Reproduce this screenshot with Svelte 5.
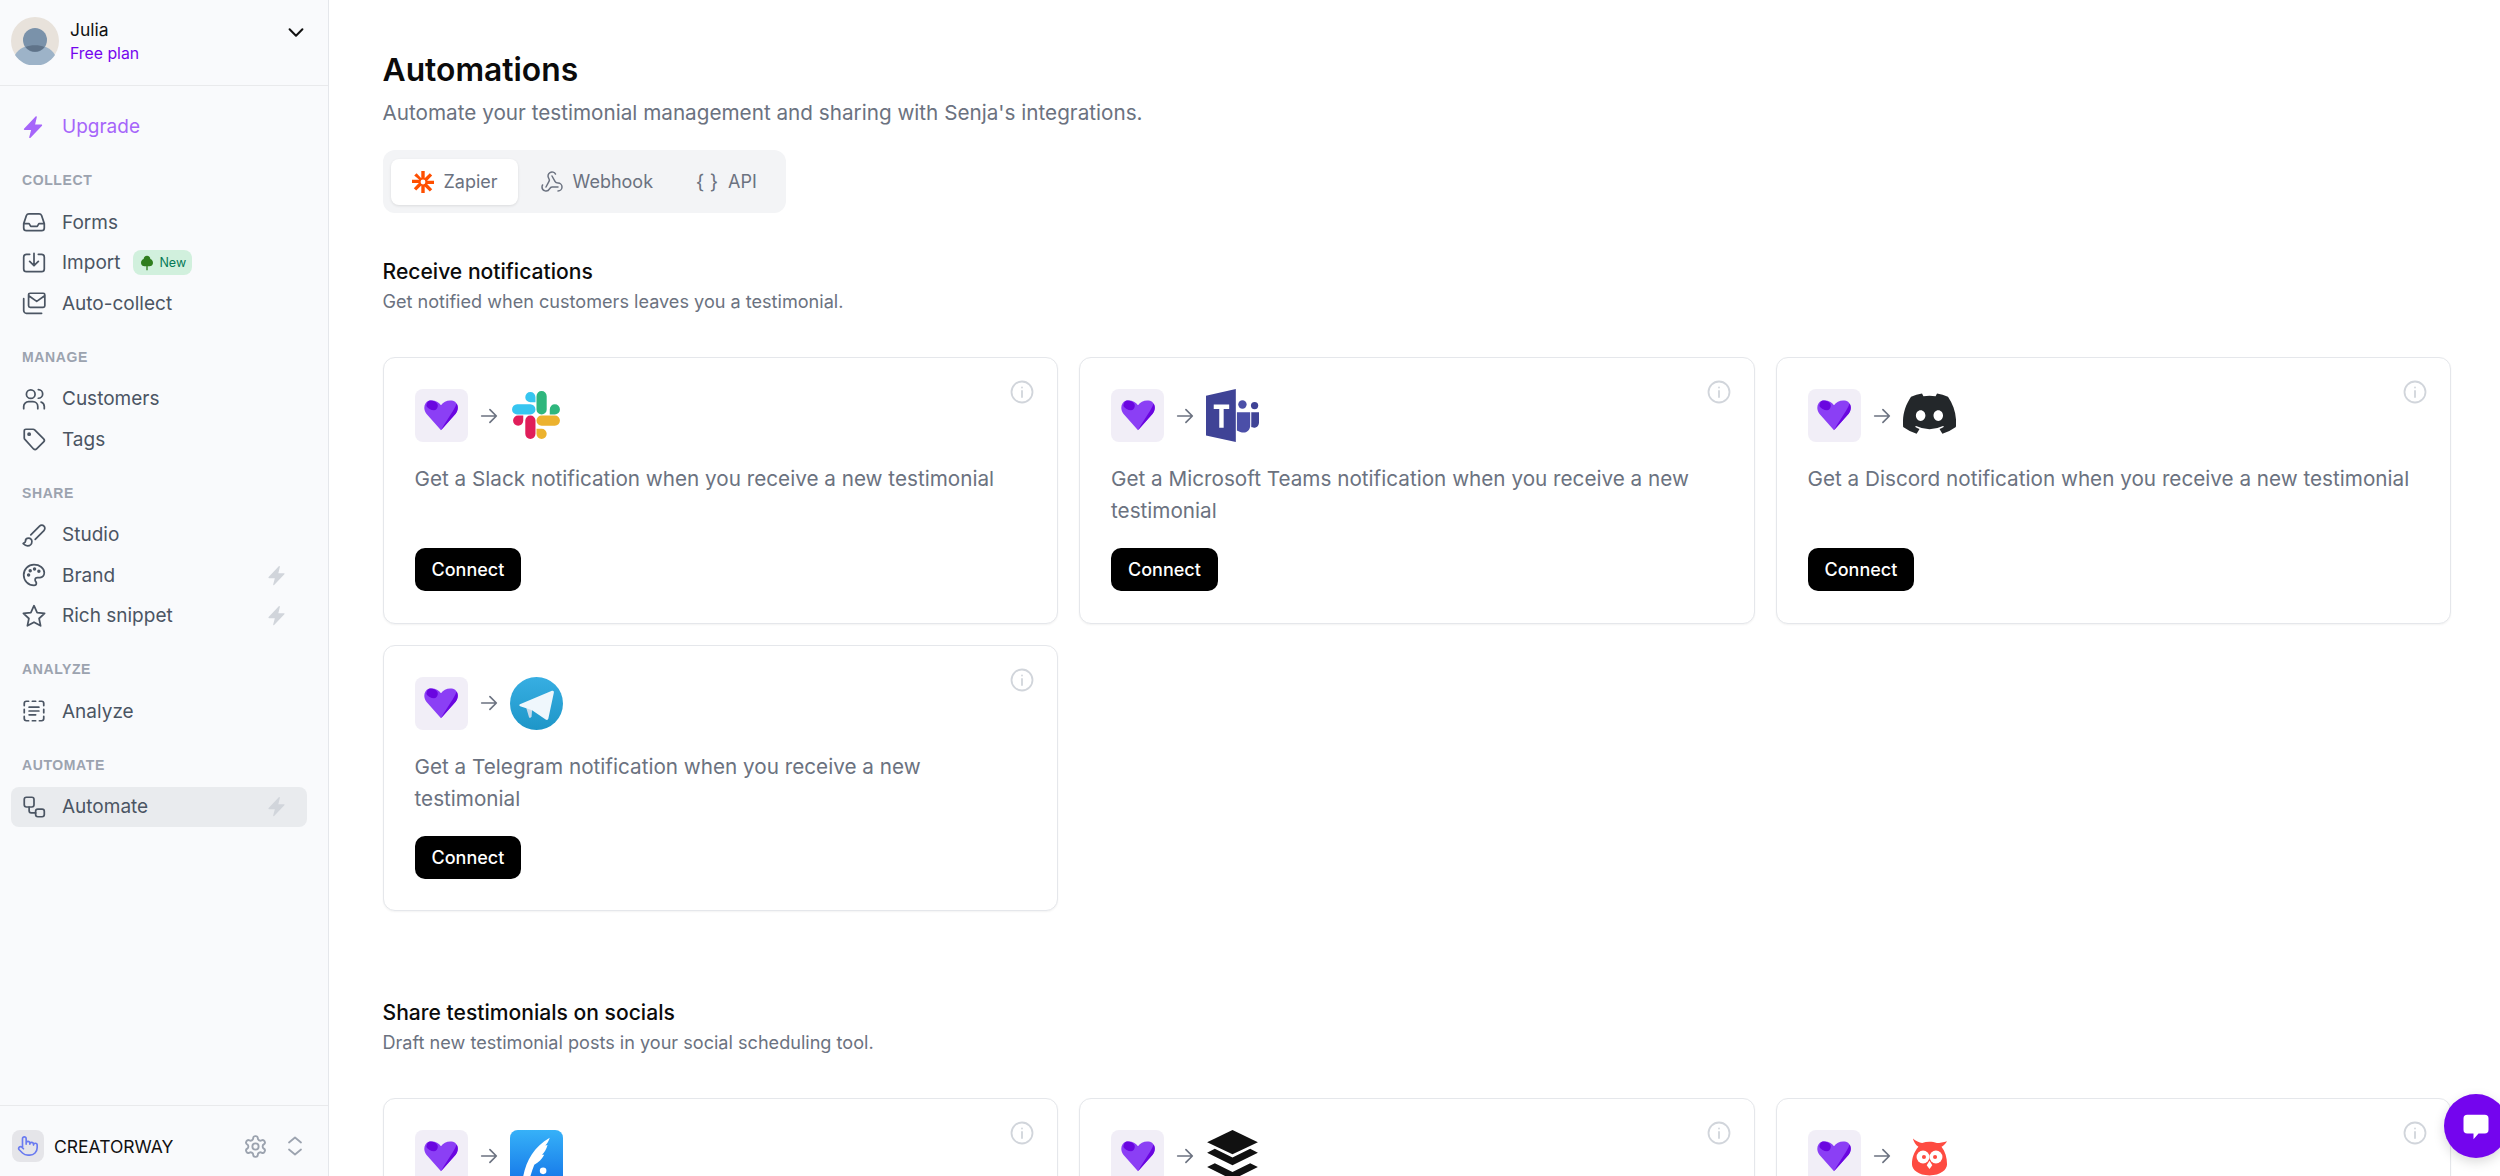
<script>
	const sections = [
		{
			title: 'COLLECT',
			items: [
				{ label: 'Forms', icon: 'inbox' },
				{ label: 'Import', icon: 'import', badge: true },
				{ label: 'Auto-collect', icon: 'collect' }
			]
		},
		{
			title: 'MANAGE',
			items: [
				{ label: 'Customers', icon: 'users' },
				{ label: 'Tags', icon: 'tag' }
			]
		},
		{
			title: 'SHARE',
			items: [
				{ label: 'Studio', icon: 'brush' },
				{ label: 'Brand', icon: 'palette', bolt: true },
				{ label: 'Rich snippet', icon: 'star', bolt: true }
			]
		},
		{
			title: 'ANALYZE',
			items: [{ label: 'Analyze', icon: 'analyze' }]
		},
		{
			title: 'AUTOMATE',
			items: [{ label: 'Automate', icon: 'automate', bolt: true, active: true }]
		}
	];

	const notifications = [
		{ logo: 'slack', text: 'Get a Slack notification when you receive a new testimonial' },
		{ logo: 'teams', text: 'Get a Microsoft Teams notification when you receive a new testimonial' },
		{ logo: 'discord', text: 'Get a Discord notification when you receive a new testimonial' },
		{ logo: 'telegram', text: 'Get a Telegram notification when you receive a new testimonial' }
	];

	// the rest of these cards is below the fold
	const socials = [{ logo: 'feather' }, { logo: 'buffer' }, { logo: 'owl' }];
</script>

{#snippet navIcon(name)}
	<svg class="nav-icon" viewBox="0 0 24 24" fill="none" stroke="currentColor" stroke-width="1.6" stroke-linecap="round" stroke-linejoin="round">
		{#if name === 'inbox'}
			<path d="M2.5 13.5v4A2.5 2.5 0 0 0 5 20h14a2.5 2.5 0 0 0 2.5-2.5v-4M2.5 13.5 5 6a2.5 2.5 0 0 1 2.3-1.500h9.400A2.5 2.5 0 0 1 19 6l2.5 7.500M2.500 13.500h5l1.500 2.500h6l1.500-2.500h5" />
		{:else if name === 'import'}
			<path d="M8 4H5a2.5 2.5 0 0 0-2.5 2.5v11A2.5 2.5 0 0 0 5 20h14a2.5 2.5 0 0 0 2.5-2.5v-11A2.5 2.5 0 0 0 19 4h-3M12 3v11M8 10.5l4 4 4-4" />
		{:else if name === 'collect'}
			<path d="M7 4.500A1.500 1.500 0 0 1 8.500 3h12A1.500 1.500 0 0 1 22 4.500v10a1.500 1.500 0 0 1-1.500 1.500h-12A1.500 1.500 0 0 1 7 14.500zM7.500 5.500l7 5 7-5M2.500 8v11A2.500 2.500 0 0 0 5 21.500h14" />
		{:else if name === 'users'}
			<circle cx="9" cy="7.5" r="4" /><path d="M2.500 21v-2A4.500 4.500 0 0 1 7 14.500h4a4.500 4.500 0 0 1 4.500 4.500v2M16 3.300a4 4 0 0 1 0 8M18.500 14.800a4.500 4.500 0 0 1 3 4.200v2" />
		{:else if name === 'tag'}
			<path d="M3 4.500A1.500 1.500 0 0 1 4.500 3h6.700a2 2 0 0 1 1.400.6l8.300 8.300a2 2 0 0 1 0 2.800l-6.500 6.500a2 2 0 0 1-2.800 0L3.600 12.400a2 2 0 0 1-.6-1.400z" /><circle cx="7.5" cy="7.5" r="1" />
		{:else if name === 'brush'}
			<path d="m9.060 11.900 8.070-8.060a2.850 2.850 0 1 1 4.030 4.030l-8.060 8.080M7.070 14.940c-1.660 0-3 1.350-3 3.020 0 1.330-2.500 1.520-2 2.020 1.080 1.100 2.490 2.020 4 2.020 2.200 0 4-1.800 4-4.040a3.010 3.010 0 0 0-3-3.020z" />
		{:else if name === 'palette'}
			<path d="M12 2.500a9.500 9.500 0 1 0 0 19c1.500 0 2.200-1 2.200-2 0-.6-.3-1-.6-1.400-.4-.5-.6-.9-.6-1.500 0-1.200 1-2.100 2.200-2.100h2.300a4.500 4.500 0 0 0 4-4.500c0-4.400-4.300-7.500-9.500-7.500z" /><circle cx="7" cy="12" r=".8" /><circle cx="8.5" cy="8" r=".8" /><circle cx="12.5" cy="6.500" r=".8" /><circle cx="16.5" cy="8.500" r=".8" />
		{:else if name === 'star'}
			<path d="m12 2.500 2.900 6.300 6.900.8-5.100 4.700 1.400 6.800L12 17.700l-6.100 3.400 1.400-6.800L2.200 9.600l6.900-.8z" />
		{:else if name === 'analyze'}
			<path d="M7 3H5a2 2 0 0 0-2 2v2M10.500 3h3M17 3h2a2 2 0 0 1 2 2v2M21 10.500v3M21 17v2a2 2 0 0 1-2 2h-2M13.500 21h-3M7 21H5a2 2 0 0 1-2-2v-2M3 13.500v-3M7.500 8.500h9M7.500 12h9M7.500 15.500h6" />
		{:else if name === 'automate'}
			<rect x="3" y="3" width="9" height="9" rx="2" /><rect x="13.500" y="14" width="8" height="7" rx="2" /><path d="M7.500 12v3.500a2 2 0 0 0 2 2h4" />
		{/if}
	</svg>
{/snippet}

{#snippet bolt(cls)}
	<svg class={cls} viewBox="0 0 24 24" fill="currentColor"><path d="M14.600 1.500 3 13.800c-.4.500-.1 1.200.5 1.200h6.600l-1.900 7.300c-.2.700.6 1.100 1.100.6L21 10.700c.4-.5.100-1.200-.6-1.200h-6.300l1.700-7.300c.2-.8-.7-1.200-1.200-.7z" /></svg>
{/snippet}

{#snippet logo(name)}
	{#if name === 'slack'}
		<svg class="logo" viewBox="-2 -2 52 52">
			<path fill="#36c5f0" d="M18 1a5 5 0 0 0 0 10h5V6a5 5 0 0 0-5-5zM5 13a5 5 0 0 0 0 10h13a5 5 0 0 0 0-10z" />
			<path fill="#2eb67d" d="M47 18a5 5 0 0 0-10 0v5h5a5 5 0 0 0 5-5zM34 18V5a5 5 0 0 0-10 0v13a5 5 0 0 0 10 0z" />
			<path fill="#ecb22e" d="M29 47a5 5 0 0 0 0-10h-5v5a5 5 0 0 0 5 5zM29 34h13a5 5 0 0 0 0-10H29a5 5 0 0 0 0 10z" />
			<path fill="#e01e5a" d="M1 29a5 5 0 0 0 10 0v-5H6a5 5 0 0 0-5 5zM13 29v13a5 5 0 0 0 10 0V29a5 5 0 0 0-10 0z" />
		</svg>
	{:else if name === 'teams'}
		<svg class="logo" viewBox="0 0 48 48">
			<circle cx="33" cy="14" r="3.800" fill="#4b4fa8" /><circle cx="44" cy="15" r="3.300" fill="#3f4396" />
			<path fill="#4b4fa8" d="M28 21h12v12c0 4-3 6.500-6 6.500-2 0-4-1-6-2z" />
			<path fill="#3f4396" d="M41 21h7v9c0 3-2 5-4.500 5-1 0-2-.3-2.500-.5z" />
			<path fill="#3f4396" d="M0 6 27 0v48L0 42z" />
			<path fill="#fff" d="M7 14h14v4h-5v17h-4V18H7z" />
		</svg>
	{:else if name === 'discord'}
		<svg class="logo discord" viewBox="0 0 127 96">
			<path fill="#23272a" d="M107.700 8.100A105 105 0 0 0 81.500 0a72 72 0 0 0-3.400 6.800 97.700 97.700 0 0 0-29.100 0A72 72 0 0 0 45.600 0a105.900 105.900 0 0 0-26.300 8.100C2.700 32.700-1.800 56.600.4 80.200A105.700 105.700 0 0 0 32.600 96.300a77.700 77.700 0 0 0 6.900-11.100 68.400 68.400 0 0 1-10.900-5.200c.9-.7 1.800-1.300 2.600-2a75.600 75.600 0 0 0 64.700 0c.9.700 1.700 1.400 2.600 2a68.700 68.700 0 0 1-10.900 5.200 77 77 0 0 0 6.900 11.100 105.300 105.300 0 0 0 32.200-16.100c2.600-27.300-4.500-51-18.900-72.100zM42.300 65.700c-6.300 0-11.400-5.700-11.400-12.700s5-12.700 11.400-12.700 11.500 5.700 11.400 12.700-5.100 12.700-11.400 12.700zm42.200 0c-6.300 0-11.400-5.700-11.400-12.700s5-12.700 11.400-12.700 11.500 5.700 11.400 12.700-5 12.700-11.400 12.700z" />
		</svg>
	{:else if name === 'telegram'}
		<svg class="logo" viewBox="0 0 48 48">
			<defs><linearGradient id="tg" x1="0" y1="0" x2="0" y2="1"><stop offset="0" stop-color="#37aee2" /><stop offset="1" stop-color="#1e96c8" /></linearGradient></defs>
			<circle cx="24" cy="24" r="24" fill="url(#tg)" />
			<path fill="#c8daea" d="M18 37c-.8 0-.7-.3-.9-1l-2.300-7.700 17.500-10.400L20 30l-.5 6.300c-.3 0-.8.700-1.500.700z" />
			<path fill="#eff7fc" d="M9 24.700 38 12.500c1.200-.4 2 .3 1.700 1.800l-4.900 23c-.3 1.500-1.300 1.900-2.500 1.200L20 30l-6-2-4.800-1.600c-1-.4-1-1.200-.2-1.700z" />
		</svg>
	{:else if name === 'feather'}
		<svg class="logo" viewBox="0 0 48 48">
			<defs><linearGradient id="fe" x1="0" y1="0" x2="0" y2="1"><stop offset="0" stop-color="#36b1f8" /><stop offset="1" stop-color="#1576e8" /></linearGradient></defs>
			<rect width="48" height="48" rx="7" fill="url(#fe)" />
			<path fill="#fff" d="M11 48c2-17 9-32 25-41-1 3-2 5-4 7l2-.5c-1 4-3 7-5 9h2c-2 4-5 7-9 9-2 5-4 11-5 16.500z" />
			<circle cx="30" cy="37" r="3" fill="#fff" />
		</svg>
	{:else if name === 'buffer'}
		<svg class="logo" viewBox="0 0 48 48">
			<path fill="#111" d="M24 0 47 11 24 22 1 11z" />
			<path fill="#111" d="m8 17 16 8 16-8 7 3.500-23 11.500L1 20.500z" />
			<path fill="#111" d="m8 30 16 8 16-8 7 3.500-23 11.500L1 33.500z" />
		</svg>
	{:else if name === 'owl'}
		<svg class="logo" viewBox="-4.700 -3.200 57.400 57.400">
			<path fill="#fe4b41" d="M6 6c3 3 7 4 10 5 5-2 11-2 16 0 3 0 7-1 11-2-2 3-4 5-6 6 4 5 6 12 6 19 0 6-7 12-19 12S5 40 5 34c0-7 2-13 7-19-3-2-5-5-6-9z" />
			<circle cx="17" cy="26" r="7" fill="#fff" /><circle cx="31" cy="26" r="7" fill="#fff" />
			<circle cx="18" cy="26" r="2.200" fill="#fe4b41" /><circle cx="30" cy="26" r="2.200" fill="#fe4b41" />
			<path fill="#fff" d="m24 30-3 5 3 4 3-4z" />
		</svg>
	{/if}
{/snippet}

{#snippet card(item)}
	<div class="card">
		<svg class="info" viewBox="0 0 24 24" fill="none" stroke="currentColor" stroke-width="1.800" stroke-linecap="round"><circle cx="12" cy="12" r="10.500" /><path d="M12 11v6M12 7.500v.1" /></svg>
		<div class="card-top">
			<span class="heart-box">
				<svg viewBox="0 0 40 36" class="heart">
					<path fill="#8b3ff5" d="M20 35 3 16C-1 11 0 3 6 1c5-1.500 11 .500 14 5 3-4.500 9-6.500 14-5 6 2 7 10 3 15z" />
					<path fill="#6a06e0" d="M20 35 37 16c3-4 3.500-9 1-12-2 7-10 17-18 31zM6 1c4-1 8 .5 10 4 1 3-1 7-4 7-4 0-7-2-9-5 .5-3 1-5 3-6z" />
				</svg>
			</span>
			<svg class="arrow" viewBox="0 0 24 24" fill="none" stroke="currentColor" stroke-width="1.800" stroke-linecap="round" stroke-linejoin="round"><path d="M4 12h16M13 5l7 7-7 7" /></svg>
			{@render logo(item.logo)}
		</div>
		{#if item.text}
			<p class="card-text">{item.text}</p>
			<button class="connect">Connect</button>
		{/if}
	</div>
{/snippet}

<div class="page">
	<aside class="sidebar">
		<div class="account">
			<span class="avatar">
				<svg viewBox="0 0 48 48">
					<circle cx="24" cy="24" r="24" fill="#e8e2db" />
					<path fill="#9db3c8" d="M4 38c4-7 11-10 20-10s16 3 20 10a24 24 0 0 1-40 0z" />
					<circle cx="24" cy="23" r="12" fill="#7a92aa" />
					<path fill="#5f7389" d="M14.500 30c5-2.500 14-2.500 19 0a12 12 0 0 1-19 0z" />
				</svg>
			</span>
			<div class="account-text">
				<span class="account-name">Julia</span>
				<span class="account-plan">Free plan</span>
			</div>
			<svg class="chevron" viewBox="0 0 24 24" fill="none" stroke="currentColor" stroke-width="2.200" stroke-linecap="round" stroke-linejoin="round"><path d="m5 8 7 7 7-7" /></svg>
		</div>

		<nav class="nav">
			<a class="upgrade" href="#upgrade">
				{@render bolt('upgrade-bolt')}
				<span>Upgrade</span>
			</a>

			{#each sections as section}
				<div class="section">
					<h4 class="section-title">{section.title}</h4>
					{#each section.items as item}
						<a class="nav-item" class:active={item.active} href="#item">
							{@render navIcon(item.icon)}
							<span>{item.label}</span>
							{#if item.badge}
								<span class="badge">
									<svg viewBox="0 0 24 24" fill="#2f7d1e"><path d="M12 1c3 0 5 2.500 5 5 2.500 1 4 3 4 6 0 3-2.500 5-5.500 5H13v6h-2v-6H8.500C5.500 17 3 15 3 12c0-3 1.500-5 4-6 0-2.500 2-5 5-5z" /></svg>
									New
								</span>
							{/if}
							{#if item.bolt}
								{@render bolt('nav-bolt')}
							{/if}
						</a>
					{/each}
				</div>
			{/each}
		</nav>

		<div class="workspace">
			<span class="workspace-logo">
				<svg viewBox="0 0 24 24" fill="none" stroke="#6a7bf0" stroke-width="1.800" stroke-linecap="round" stroke-linejoin="round"><path d="M22 14a8 8 0 0 1-8 8M18 11v-1a2 2 0 0 0-2-2 2 2 0 0 0-2 2M14 10V9a2 2 0 0 0-2-2 2 2 0 0 0-2 2v1M10 9.500V4a2 2 0 0 0-2-2 2 2 0 0 0-2 2v10M18 11a2 2 0 1 1 4 0v3a8 8 0 0 1-8 8h-2c-2.800 0-4.500-.86-5.990-2.340l-3.600-3.600a2 2 0 0 1 2.830-2.820L7 15" /></svg>
			</span>
			<span class="workspace-name">CREATORWAY</span>
			<svg class="workspace-icon" viewBox="0 0 24 24" fill="none" stroke="currentColor" stroke-width="1.800" stroke-linecap="round" stroke-linejoin="round"><circle cx="12" cy="12" r="3" /><path d="M12.220 2h-.44a2 2 0 0 0-2 2v.18a2 2 0 0 1-1 1.730l-.43.25a2 2 0 0 1-2 0l-.15-.08a2 2 0 0 0-2.730.73l-.22.38a2 2 0 0 0 .73 2.730l.15.1a2 2 0 0 1 1 1.720v.51a2 2 0 0 1-1 1.740l-.15.09a2 2 0 0 0-.73 2.730l.22.38a2 2 0 0 0 2.730.73l.15-.08a2 2 0 0 1 2 0l.43.25a2 2 0 0 1 1 1.730V20a2 2 0 0 0 2 2h.44a2 2 0 0 0 2-2v-.18a2 2 0 0 1 1-1.730l.43-.25a2 2 0 0 1 2 0l.15.08a2 2 0 0 0 2.730-.73l.22-.39a2 2 0 0 0-.73-2.730l-.15-.08a2 2 0 0 1-1-1.740v-.5a2 2 0 0 1 1-1.740l.15-.09a2 2 0 0 0 .73-2.730l-.22-.38a2 2 0 0 0-2.730-.73l-.15.08a2 2 0 0 1-2 0l-.43-.25a2 2 0 0 1-1-1.730V4a2 2 0 0 0-2-2z" /></svg>
			<svg class="workspace-icon updown" viewBox="0 0 24 24" fill="none" stroke="currentColor" stroke-width="1.800" stroke-linecap="round" stroke-linejoin="round"><path d="m6 8.500 6-5 6 5M6 15.500l6 5 6-5" /></svg>
		</div>
	</aside>

	<main class="main">
		<h1 class="title">Automations</h1>
		<p class="subtitle">Automate your testimonial management and sharing with Senja's integrations.</p>

		<div class="tabs">
			<div class="tab selected">
				<svg class="tab-icon" viewBox="0 0 24 24" fill="#ff4f00"><path d="M10.300 1h3.400v7.300l5.100-5.100 2.400 2.400-5.100 5.100H23v3.400h-6.900l5.100 5.100-2.400 2.400-5.100-5.100V23h-3.400v-7.500l-5.100 5.100-2.400-2.400 5.100-5.100H1v-3.400h7.300L3.200 5.600l2.400-2.400 4.700 5.100z" /><circle cx="12" cy="12" r="2.400" fill="#fff" /></svg>
				Zapier
			</div>
			<div class="tab">
				<svg class="tab-icon" viewBox="0 0 24 24" fill="none" stroke="currentColor" stroke-width="1.500" stroke-linecap="round" stroke-linejoin="round"><path d="M18 16.980h-5.990c-1.100 0-1.950.94-2.480 1.900A4 4 0 0 1 2 17c.01-.7.2-1.400.57-2M6 17l3.130-5.780c.53-.97.1-2.180-.5-3.100a4 4 0 1 1 6.890-4.060M12 6l3.130 5.730C15.660 12.700 16.900 13 18 13a4 4 0 0 1 0 8" /></svg>
				Webhook
			</div>
			<div class="tab">
				<span class="braces">{'{ }'}</span>
				API
			</div>
		</div>

		<h2 class="section-heading">Receive notifications</h2>
		<p class="section-sub">Get notified when customers leaves you a testimonial.</p>
		<div class="cards">
			{#each notifications as item}
				{@render card(item)}
			{/each}
		</div>

		<h2 class="section-heading second">Share testimonials on socials</h2>
		<p class="section-sub">Draft new testimonial posts in your social scheduling tool.</p>
		<div class="cards">
			{#each socials as item}
				{@render card(item)}
			{/each}
		</div>
	</main>

	<button class="chat" aria-label="Open chat">
		<svg viewBox="0 0 24 24" fill="#fff"><path d="M5 3h14a3 3 0 0 1 3 3v9a3 3 0 0 1-3 3h-5l-4 4.500V18H5a3 3 0 0 1-3-3V6a3 3 0 0 1 3-3z" /></svg>
	</button>
</div>

<style>
	:global(body) {
		margin: 0;
		font-family: Inter, 'Liberation Sans', sans-serif;
		background: #fff;
	}

	.page {
		display: flex;
		height: 1176px;
		overflow: hidden;
		position: relative;
	}

	/* SIDEBAR */
	.sidebar {
		width: 329px;
		flex-shrink: 0;
		box-sizing: border-box;
		display: flex;
		flex-direction: column;
		background: #f9fafc;
		border-right: 1px solid #e5e7eb;
		height: 100%;
	}

	.account {
		display: flex;
		align-items: center;
		height: 86px;
		box-sizing: border-box;
		padding: 0 21px 4px 11px;
		gap: 11px;
		border-bottom: 1px solid #e9eaec;
		flex-shrink: 0;
	}

	.avatar {
		width: 48px;
		height: 48px;
		flex-shrink: 0;
	}

	.avatar svg {
		display: block;
		width: 48px;
		height: 48px;
	}

	.account-text {
		display: flex;
		flex-direction: column;
		flex: 1;
		gap: 2.500px;
		margin-top: 2px;
	}

	.account-name {
		font-size: 17.500px;
		line-height: 22px;
		color: #111;
	}

	.account-plan {
		font-size: 15.800px;
		line-height: 20px;
		color: #7405ee;
	}

	.chevron {
		width: 22px;
		height: 22px;
		margin-bottom: 15px;
		color: #111;
	}

	.nav {
		flex: 1;
		padding: 20px 21px 0 11px;
	}

	.upgrade {
		display: flex;
		align-items: center;
		gap: 17px;
		height: 41px;
		padding-left: 10px;
		color: #a665fa;
		font-size: 19px;
		text-decoration: none;
	}

	.upgrade-bolt {
		width: 24px;
		height: 24px;
	}

	.section {
		margin-top: 21px;
	}

	.section-title {
		margin: 0 0 10px;
		padding-left: 11px;
		font-size: 14px;
		line-height: 24px;
		font-weight: 700;
		letter-spacing: 0.6px;
		color: #9ca3af;
		font-family: 'Liberation Sans', sans-serif;
	}

	.nav-item {
		display: flex;
		align-items: center;
		gap: 15px;
		height: 40.500px;
		padding: 0 20px 0 10px;
		border-radius: 8px;
		color: #4b5563;
		font-size: 19px;
		text-decoration: none;
	}

	.nav-item.active {
		background: #e9ebee;
		height: 40px;
	}

	.nav-icon {
		width: 26px;
		height: 26px;
		flex-shrink: 0;
	}

	.nav-bolt {
		width: 21px;
		height: 21px;
		margin-left: auto;
		color: #d1d5db;
	}

	.badge {
		display: inline-flex;
		align-items: center;
		gap: 4px;
		height: 25px;
		padding: 0 6px;
		margin-left: -2px;
		border-radius: 8px;
		background: #d1f0dd;
		color: #067a57;
		font-size: 12.500px;
	}

	.badge svg {
		width: 16px;
		height: 16px;
	}

	.workspace {
		display: flex;
		align-items: center;
		height: 71px;
		box-sizing: border-box;
		border-top: 1px solid #e9eaec;
		padding: 10px 21px 0 12px;
		flex-shrink: 0;
	}

	.workspace-logo {
		width: 32px;
		height: 32px;
		border-radius: 8px;
		background: #e5e5e9;
		display: flex;
		align-items: center;
		justify-content: center;
	}

	.workspace-logo svg {
		width: 22px;
		height: 22px;
	}

	.workspace-name {
		flex: 1;
		margin-left: 10px;
		font-size: 17.500px;
		color: #111;
	}

	.workspace-icon {
		width: 25px;
		height: 25px;
		color: #9ca3af;
	}

	.workspace-icon.updown {
		width: 24px;
		height: 24px;
		margin-left: 15px;
	}

	/* MAIN */
	.main {
		flex: 1;
		min-width: 0;
		padding: 46px 49px 0 53.500px;
	}

	.title {
		margin: 0;
		font-size: 31.800px;
		line-height: 48px;
		font-weight: 600;
		color: #0b0b0b;
	}

	.subtitle {
		margin: 4px 0 0;
		font-size: 20.700px;
		line-height: 30px;
		color: #6b7280;
	}

	.tabs {
		display: flex;
		width: fit-content;
		align-items: center;
		gap: 2px;
		margin-top: 22px;
		padding: 8.500px 9px 8.500px 8px;
		background: #f3f4f6;
		border-radius: 12px;
	}

	.tab {
		display: flex;
		align-items: center;
		gap: 9px;
		height: 46px;
		padding: 0 20px;
		border-radius: 8px;
		font-size: 18px;
		color: #6b7280;
	}

	.tab.selected {
		background: #fff;
		box-shadow: 0 1px 3px rgba(0, 0, 0, 0.1);
	}

	.tab-icon {
		width: 24px;
		height: 24px;
	}

	.braces {
		font-size: 20px;
		width: 24px;
		text-align: center;
	}

	.section-heading {
		margin: 44px 0 0;
		font-size: 21.100px;
		line-height: 30px;
		font-weight: 500;
		color: #0b0b0b;
	}

	.section-heading.second {
		margin-top: 86.500px;
	}

	.section-sub {
		margin: 1px 0 0;
		font-size: 18.100px;
		line-height: 26px;
		color: #6b7280;
	}

	.cards {
		display: grid;
		grid-template-columns: repeat(3, 1fr);
		gap: 21px;
		margin-top: 43px;
	}

	.card {
		position: relative;
		box-sizing: border-box;
		height: 266.500px;
		padding: 31px 31px 31.500px;
		background: #fff;
		border: 1px solid #e5e7eb;
		border-radius: 12px;
		box-shadow: 0 1px 2px rgba(0, 0, 0, 0.05);
		display: flex;
		flex-direction: column;
		align-items: flex-start;
	}

	.info {
		position: absolute;
		top: 22px;
		right: 23px;
		width: 24px;
		height: 24px;
		color: #d1d5db;
	}

	.card-top {
		display: flex;
		align-items: center;
		height: 53px;
		flex-shrink: 0;
	}

	.heart-box {
		width: 53px;
		height: 53px;
		border-radius: 8px;
		background: #f1eef7;
		display: flex;
		align-items: center;
		justify-content: center;
	}

	.heart {
		width: 36px;
		height: 31px;
	}

	.arrow {
		width: 22px;
		height: 22px;
		margin: 0 10px;
		color: #6b7280;
	}

	.logo {
		width: 53px;
		height: 53px;
		display: block;
	}

	.logo.discord {
		margin-bottom: 4px;
	}

	.card-text {
		margin: 21px 0 0;
		font-size: 20.700px;
		line-height: 32px;
		color: #6b7280;
	}

	.connect {
		margin-top: auto;
		height: 43px;
		padding: 0 17px;
		border: none;
		border-radius: 10px;
		background: #000;
		color: #fff;
		font-family: inherit;
		font-size: 18px;
		font-weight: 500;
	}

	.chat {
		position: absolute;
		right: -8px;
		bottom: 18px;
		width: 64px;
		height: 64px;
		border: none;
		border-radius: 50%;
		background: #7405ee;
		box-shadow: 0 4px 12px rgba(0, 0, 0, 0.15);
		display: flex;
		align-items: center;
		justify-content: center;
		padding: 0;
	}

	.chat svg {
		width: 30px;
		height: 30px;
	}
</style>
